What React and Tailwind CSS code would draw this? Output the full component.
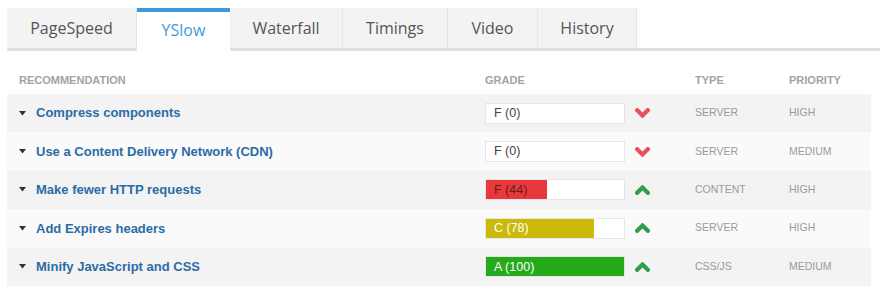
import { useState } from 'react'

const tabs = ['PageSpeed', 'YSlow', 'Waterfall', 'Timings', 'Video', 'History']
const tabWidths = ['w-[130px]', 'w-[93px]', 'w-[113px]', 'w-[105px]', 'w-[90px]', 'w-[99px]']

const rows = [
  { title: 'Compress components', grade: 'F (0)', score: 0, fill: '', text: 'text-[#444]', up: false, type: 'SERVER', priority: 'HIGH' },
  { title: 'Use a Content Delivery Network (CDN)', grade: 'F (0)', score: 0, fill: '', text: 'text-[#444]', up: false, type: 'SERVER', priority: 'MEDIUM' },
  { title: 'Make fewer HTTP requests', grade: 'F (44)', score: 44, fill: 'bg-[#e9383c]', text: 'text-[#6b1c1c]', up: true, type: 'CONTENT', priority: 'HIGH' },
  { title: 'Add Expires headers', grade: 'C (78)', score: 78, fill: 'bg-[#ccb90a]', text: 'text-white', up: true, type: 'SERVER', priority: 'HIGH' },
  { title: 'Minify JavaScript and CSS', grade: 'A (100)', score: 100, fill: 'bg-[#25aa19]', text: 'text-white', up: true, type: 'CSS/JS', priority: 'MEDIUM' }
]

function Chevron({ up }) {
  return (
    <svg width="15" height="10" viewBox="0 0 15 10">
      <polyline
        points={up ? '2.2,7.8 7.5,2.5 12.8,7.8' : '2.2,2.2 7.5,7.5 12.8,2.2'}
        fill="none"
        stroke={up ? '#2f9e4a' : '#e8505c'}
        strokeWidth="4.2"
        strokeLinecap="square"
      />
    </svg>
  )
}

export default function App() {
  const [active, setActive] = useState(1)

  return (
    <div className="w-[880px] h-[287px] bg-white overflow-hidden pt-2 pl-[7px] font-['Liberation_Sans',Arial,sans-serif]">
      {/* Tabs */}
      <div className="flex items-start h-[43px] border-b-[3px] border-[#e1e1e1]">
        {tabs.map((tab, i) => (
          <button
            key={tab}
            onClick={() => setActive(i)}
            className={`${tabWidths[i]} flex items-center justify-center font-['Open_Sans',sans-serif] text-[16px] ${
              active === i
                ? 'h-[43px] bg-white border-t-[4px] border-[#3d9adb] text-[#3f9bdc] pb-[4px]'
                : 'h-10 bg-[#f3f3f3] border-r border-[#e4e4e4] text-[#555]'
            }`}
          >
            {tab}
          </button>
        ))}
      </div>

      {/* Table */}
      <div className="mr-[9px]">
        <div className="grid grid-cols-[478px_210px_94px_1fr] h-[43px] pt-[23px] leading-[13px] text-[11px] font-bold text-[#a3a3a3]">
          <div className="pl-3">RECOMMENDATION</div>
          <div>GRADE</div>
          <div>TYPE</div>
          <div>PRIORITY</div>
        </div>

        {rows.map((row, i) => (
          <div
            key={row.title}
            className={`grid grid-cols-[478px_210px_94px_1fr] items-center h-[38.4px] ${
              i % 2 === 0 ? 'bg-[#f3f3f3]' : 'bg-[#fafafa]'
            }`}
          >
            <div className="flex items-center pl-3">
              <svg width="7" height="5" viewBox="0 0 7 5" className="mr-[10px]">
                <polygon points="0,0 7,0 3.5,4.5" fill="#333" />
              </svg>
              <span className="text-[13px] font-bold text-[#2b6ca6]">{row.title}</span>
            </div>
            <div className="flex items-center">
              <div className="relative flex items-center w-[140px] h-[21px] bg-white border border-[#e6e6e6]">
                {row.score > 0 && (
                  <div className={`absolute left-0 top-0 bottom-0 ${row.fill}`} style={{ width: `${row.score}%` }} />
                )}
                <span className={`relative pl-2 text-[12.5px] leading-none ${row.text}`}>{row.grade}</span>
              </div>
              <div className="ml-[10px] flex items-center">
                <Chevron up={row.up} />
              </div>
            </div>
            <div className="text-[10.5px] text-[#9a9a9a]">{row.type}</div>
            <div className="text-[10.5px] text-[#9a9a9a]">{row.priority}</div>
          </div>
        ))}
      </div>
    </div>
  )
}
